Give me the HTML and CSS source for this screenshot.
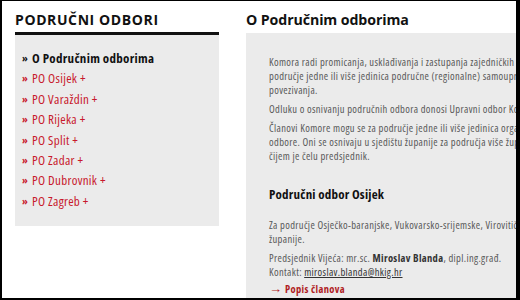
FILE: index.html
```html
<!DOCTYPE html>
<html lang="hr">
<head>
<meta charset="utf-8">
<title>Područni odbori</title>
<link rel="stylesheet" href="styles.css">
</head>
<body>
<div class="page">
  <aside class="sidebar">
    <h2 class="side-title">PODRUČNI ODBORI</h2>
    <ul class="side-list">
      <li class="active"><span class="raquo">»</span>O Područnim odborima</li>
      <li><span class="raquo">»</span>PO Osijek +</li>
      <li><span class="raquo">»</span>PO Varaždin +</li>
      <li><span class="raquo">»</span>PO Rijeka +</li>
      <li><span class="raquo">»</span>PO Split +</li>
      <li><span class="raquo">»</span>PO Zadar +</li>
      <li><span class="raquo">»</span>PO Dubrovnik +</li>
      <li><span class="raquo">»</span>PO Zagreb +</li>
    </ul>
  </aside>
  <main class="main">
    <h1 class="main-title">O Područnim odborima</h1>
    <div class="box">
      <p>Komora radi promicanja, usklađivanja i zastupanja zajedničkih interesa osniva područne odbore za<br>područje jedne ili više jedinica područne (regionalne) samouprave radi boljeg<br>povezivanja.</p>
      <p>Odluku o osnivanju područnih odbora donosi Upravni odbor Komore.</p>
      <p>Članovi Komore mogu se za područje jedne ili više jedinica organizirati u područne<br>odbore. Oni se osnivaju u sjedištu županije za područja više županija, a na<br>čijem je čelu predsjednik.</p>
      <h3 class="sub-title">Područni odbor Osijek</h3>
      <p>Za područje Osječko-baranjske, Vukovarsko-srijemske, Virovitičko-podravske<br>županije.</p>
      <p>Predsjednik Vijeća: mr.sc. <b>Miroslav Blanda</b>, dipl.ing.građ.<br>Kontakt: <a class="mail" href="#">miroslav.blanda@hkig.hr</a></p>
      <p class="more"><span class="arrow">→</span>Popis članova</p>
    </div>
  </main>
</div>
</body>
</html>
```

FILE: styles.css
```css
html, body {
  margin: 0;
  padding: 0;
}
body {
  width: 520px;
  height: 300px;
  box-sizing: border-box;
  border-style: solid;
  border-color: #000;
  border-width: 1px 4px 2px 2px;
  overflow: hidden;
  background: #fff;
  font-family: "Open Sans", "Noto Sans", sans-serif;
  font-stretch: 87.5%;
}
.page {
  display: flex;
  padding-left: 13px;
  height: 100%;
}
.sidebar {
  width: 204px;
  flex: none;
}
.side-title {
  margin: 0;
  padding-top: 9px;
  height: 22px;
  font-size: 14px;
  line-height: 20px;
  font-weight: 700;
  letter-spacing: 0.6px;
  color: #111;
  border-bottom: 3px solid #111;
  font-stretch: 100%;
}
.side-list {
  list-style: none;
  margin: 0;
  padding: 13px 0 15px 7px;
  background: #ebebeb;
}
.side-list li {
  font-size: 13px;
  line-height: 20.4px;
  height: 20.4px;
  letter-spacing: 0.3px;
  color: #c8182c;
  white-space: nowrap;
}
.side-list li.active {
  color: #111;
  font-weight: 700;
}
.raquo {
  display: inline-block;
  width: 10px;
  font-size: 11px;
  line-height: 0;
  font-weight: 700;
  vertical-align: 1px;
}
.main {
  margin-left: 27px;
  flex: 1;
  min-width: 0;
}
.main-title {
  margin: 0;
  padding-top: 9px;
  height: 23px;
  font-size: 14.2px;
  line-height: 20px;
  font-weight: 700;
  letter-spacing: -0.1px;
  color: #111;
  font-stretch: 100%;
}
.box {
  background: #ebebeb;
  padding: 22px 0 0 23px;
  height: 300px;
  white-space: nowrap;
  overflow: hidden;
}
.box p {
  margin: 0 0 5px;
  font-size: 10.5px;
  line-height: 14px;
  letter-spacing: 0.35px;
  color: #585858;
}
.box p b {
  color: #333;
}
.sub-title {
  margin: 22px 0 15px;
  font-size: 13px;
  line-height: 18px;
  font-weight: 700;
  letter-spacing: 0.2px;
  color: #111;
}
.mail {
  color: #333;
  text-decoration: underline;
}
.box p.more {
  margin-top: -2px;
  color: #b01c24;
  font-weight: 700;
}
.arrow {
  display: inline-block;
  width: 16px;
  font-weight: 400;
  font-size: 13px;
  line-height: 0;
  letter-spacing: 0;
}
```
